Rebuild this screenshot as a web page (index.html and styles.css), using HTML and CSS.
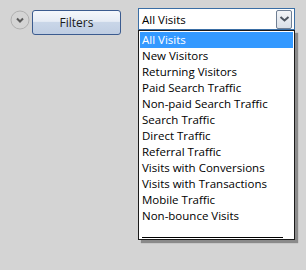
FILE: index.html
```html
<html lang="en">
<head>
    <meta charset="UTF-8">
    <meta name="viewport" content="width=device-width, initial-scale=1.0">
    <title>Segments</title>
    <link rel="stylesheet" href="styles.css">
</head>
<body>
<div class="toolbar">
    <div class="toggle-btn">
        <svg width="20" height="20" viewBox="0 0 20 20">
            <circle cx="10" cy="10" r="9" fill="none" stroke="#b0b0b0" stroke-width="1"/>
            <path d="M7 8.5 L10 11.5 L13 8.5" fill="none" stroke="#5a5a5a" stroke-width="2"/>
        </svg>
    </div>
    <button class="filters-btn">Filters</button>
    <div class="segment-select">
        <div class="select-box">
            <span class="select-value">All Visits</span>
            <span class="select-arrow">
                <svg width="11" height="8" viewBox="0 0 11 8">
                    <path d="M1.5 2 L5.5 5.5 L9.5 2" fill="none" stroke="#4d5560" stroke-width="2"/>
                </svg>
            </span>
        </div>
        <div class="select-list">
            <div class="option selected">All Visits</div>
            <div class="option">New Visitors</div>
            <div class="option">Returning Visitors</div>
            <div class="option">Paid Search Traffic</div>
            <div class="option">Non-paid Search Traffic</div>
            <div class="option">Search Traffic</div>
            <div class="option">Direct Traffic</div>
            <div class="option">Referral Traffic</div>
            <div class="option">Visits with Conversions</div>
            <div class="option">Visits with Transactions</div>
            <div class="option">Mobile Traffic</div>
            <div class="option">Non-bounce Visits</div>
            <div class="option blank"><span class="rule"></span></div>
        </div>
    </div>
</div>
</body>
</html>
```

FILE: styles.css
```css
/* Segment picker */
body { margin: 0; background-color: #d4d4d4; font-family: "Open Sans", "Noto Sans", sans-serif; font-size: 11.5px; color: #000; }
.toolbar { display: flex; align-items: flex-start; padding: 8px 0 0 10px; }
.toggle-btn { width: 20px; height: 20px; margin-top: 2px; }
.toggle-btn svg { display: block; }
.filters-btn { width: 89px; height: 25px; margin: 2px 0 0 2px; padding: 0; border: 1px solid #3b5b8f; border-radius: 3px; font: inherit; font-size: 12px; color: #1a1a1a; background: linear-gradient(to bottom, #f4f7fb 0%, #e6ecf5 45%, #c9d6e8 50%, #bfcde2 100%); }
.segment-select { position: relative; margin-left: 17px; width: 157px; }
.select-box { display: flex; align-items: center; justify-content: space-between; height: 20px; border: 1px solid #3a6ea5; background: #fff; padding-left: 3px; }
.select-arrow { display: flex; align-items: center; justify-content: center; width: 14px; height: 17px; margin-right: 2px; border: 1px solid #6f7f94; border-radius: 2px; background: linear-gradient(to bottom, #f3f5f8, #d9dfe7); }
.select-list { position: absolute; top: 22px; left: 0; width: 153px; padding: 1px; border: 1px solid #1a1a1a; background: #fff; box-shadow: 3px 3px 1px #8a8a8a; }
.option { height: 16px; line-height: 16px; padding-left: 2px; white-space: nowrap; }
.option.selected { background: #3399ff; color: #fff; }
.option.blank { height: 14px; display: flex; align-items: flex-end; }
.rule { display: block; width: 141px; height: 1px; background: #000; }
```
